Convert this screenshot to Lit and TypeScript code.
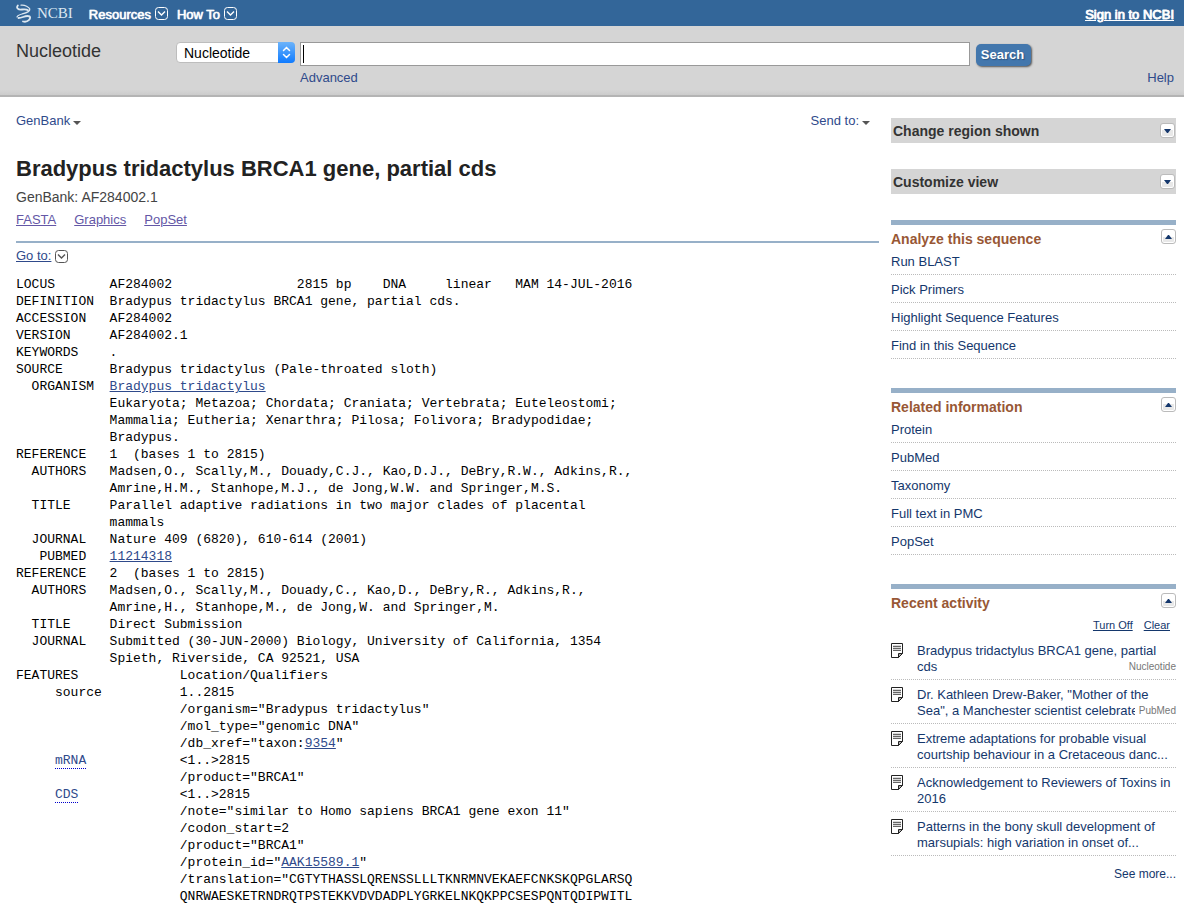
import { LitElement, html, css, svg, nothing, type TemplateResult } from "lit";
import { customElement, property } from "lit/decorators.js";
import { classMap } from "lit/directives/class-map.js";

const chevronBox = html`<svg class="chev" width="13" height="13" viewBox="0 0 13 13" aria-hidden="true">
  <rect x="0.5" y="0.5" width="12" height="12" rx="3" fill="none" stroke="currentColor" />
  <path d="M3 4.500l3.500 3.500 3.500-3.500" fill="none" stroke="currentColor" stroke-width="1.4" />
</svg>`;

const caretDown = html`<svg width="8" height="4" viewBox="0 0 8 4" aria-hidden="true">
  <path d="M0 0h8L4 4z" fill="#555" />
</svg>`;

@customElement("panel-toggle")
export class PanelToggle extends LitElement {
  @property({ type: Boolean }) open = false;
  @property() label = "";

  static styles = css`
    :host {
      display: block;
      line-height: 0;
    }
    .toggle {
      box-sizing: border-box;
      width: 15px;
      height: 15px;
      padding: 0;
      border: 1px solid #bbb;
      border-radius: 3px;
      background: linear-gradient(#fff 50%, #e8e8e8 50%);
      box-shadow: inset 0 0 0 1px #fff;
      display: grid;
      place-items: center;
      cursor: pointer;
    }
  `;

  render() {
    return html`<button class="toggle" type="button" aria-label=${this.label} aria-expanded=${this.open ? "true" : "false"}>
      <svg width="7" height="4" viewBox="0 0 7 4">
        ${this.open
          ? svg`<path d="M0 4L3 0h1l3 4z" fill="#14376c" />`
          : svg`<path d="M0 0h7L4 4H3z" fill="#14376c" />`}
      </svg>
    </button>`;
  }
}

@customElement("link-panel")
export class LinkPanel extends LitElement {
  @property() heading = "";
  @property({ attribute: false }) links: string[] = [];

  static styles = css`
    :host {
      display: block;
      border-top: 5px solid #97b0c8;
    }
    .head {
      display: flex;
      justify-content: space-between;
      align-items: flex-start;
      height: 22px;
    }
    .title {
      margin: 0;
      padding-top: 6px;
      font-size: 14px;
      line-height: 16px;
      color: #985735;
    }
    .knob {
      padding-top: 4px;
    }
    .list {
      list-style: none;
      margin: 0;
      padding: 0;
    }
    .item {
      padding: 7px 0 4px;
      border-bottom: 1px dotted #bbb;
      line-height: 16px;
    }
    .link {
      color: #14376c;
      text-decoration: none;
    }
  `;

  render() {
    return html`
      <div class="head">
        <h3 class="title">${this.heading}</h3>
        <panel-toggle class="knob" open label=${"Collapse " + this.heading}></panel-toggle>
      </div>
      ${this.links.length
        ? html`<ul class="list">
            ${this.links.map((t) => html`<li class="item"><a class="link" href="#">${t}</a></li>`)}
          </ul>`
        : nothing}
      <slot></slot>
    `;
  }
}

interface Visit {
  text: string;
  source?: string;
}

const visits: Visit[] = [
  { text: "Bradypus tridactylus BRCA1 gene, partial cds", source: "Nucleotide" },
  { text: 'Dr. Kathleen Drew-Baker, "Mother of the Sea", a Manchester scientist celebrated', source: "PubMed" },
  { text: "Extreme adaptations for probable visual courtship behaviour in a Cretaceous danc..." },
  { text: "Acknowledgement to Reviewers of Toxins in 2016" },
  { text: "Patterns in the bony skull development of marsupials: high variation in onset of..." },
];

@customElement("recent-activity")
export class RecentActivity extends LitElement {
  static styles = css`
    :host {
      display: block;
    }
    .link {
      color: #14376c;
    }
    .actions {
      display: flex;
      justify-content: flex-end;
      gap: 11px;
      padding: 7px 6px 4px 0;
      font-size: 11px;
      line-height: 14px;
    }
    .list {
      list-style: none;
      margin: 0;
      padding: 0;
    }
    .item {
      position: relative;
      display: grid;
      grid-template-columns: 12px minmax(0, 1fr);
      column-gap: 14px;
      padding: 7px 0 4px;
      border-bottom: 1px dotted #bbb;
    }
    .text {
      height: 32px;
      line-height: 16px;
      overflow: hidden;
      text-decoration: none;
    }
    .source {
      position: absolute;
      right: 0;
      bottom: 5px;
      padding-left: 4px;
      background: #fff;
      color: #777;
      font-size: 10px;
      line-height: 15px;
    }
    .more {
      padding-top: 10px;
      font-size: 12px;
      line-height: 16px;
      text-align: right;
    }
    .more .link {
      text-decoration: none;
    }
  `;

  render() {
    return html`
      <div class="actions"><a class="link" href="#">Turn Off</a><a class="link" href="#">Clear</a></div>
      <ul class="list">
        ${visits.map(
          (v) => html`<li class="item">
            <svg class="doc" width="12" height="15" viewBox="0 0 12 15" aria-hidden="true">
              <path d="M0.5 0.5h11v10l-4 4h-7z" fill="#fff" stroke="#222" />
              <path d="M2 2h8v6H2z" fill="#d8d8d8" />
              <path d="M2 3.500h8M2 5.500h8M2 7.500h8" stroke="#666" />
              <path d="M7.500 14.500v-4h4z" fill="#aaa" stroke="#222" />
            </svg>
            <a class="link text" href="#">${v.text}</a>
            ${v.source ? html`<span class="source">${v.source}</span>` : nothing}
          </li>`
        )}
      </ul>
      <div class="more"><a class="link" href="#">See more...</a></div>
    `;
  }
}

type Line = string | TemplateResult;

interface Field {
  label: string;
  indent?: number;
  link?: boolean;
  lines: Line[];
}

const header: Field[] = [
  { label: "LOCUS", lines: ["AF284002                2815 bp    DNA     linear   MAM 14-JUL-2016"] },
  { label: "DEFINITION", lines: ["Bradypus tridactylus BRCA1 gene, partial cds."] },
  { label: "ACCESSION", lines: ["AF284002"] },
  { label: "VERSION", lines: ["AF284002.1"] },
  { label: "KEYWORDS", lines: ["."] },
  { label: "SOURCE", lines: ["Bradypus tridactylus (Pale-throated sloth)"] },
  {
    label: "ORGANISM",
    indent: 2,
    lines: [
      html`<a href="#">Bradypus tridactylus</a>`,
      "Eukaryota; Metazoa; Chordata; Craniata; Vertebrata; Euteleostomi;",
      "Mammalia; Eutheria; Xenarthra; Pilosa; Folivora; Bradypodidae;",
      "Bradypus.",
    ],
  },
  { label: "REFERENCE", lines: ["1  (bases 1 to 2815)"] },
  {
    label: "AUTHORS",
    indent: 2,
    lines: [
      "Madsen,O., Scally,M., Douady,C.J., Kao,D.J., DeBry,R.W., Adkins,R.,",
      "Amrine,H.M., Stanhope,M.J., de Jong,W.W. and Springer,M.S.",
    ],
  },
  {
    label: "TITLE",
    indent: 2,
    lines: ["Parallel adaptive radiations in two major clades of placental", "mammals"],
  },
  { label: "JOURNAL", indent: 2, lines: ["Nature 409 (6820), 610-614 (2001)"] },
  { label: "PUBMED", indent: 3, lines: [html`<a href="#">11214318</a>`] },
  { label: "REFERENCE", lines: ["2  (bases 1 to 2815)"] },
  {
    label: "AUTHORS",
    indent: 2,
    lines: [
      "Madsen,O., Scally,M., Douady,C., Kao,D., DeBry,R., Adkins,R.,",
      "Amrine,H., Stanhope,M., de Jong,W. and Springer,M.",
    ],
  },
  { label: "TITLE", indent: 2, lines: ["Direct Submission"] },
  {
    label: "JOURNAL",
    indent: 2,
    lines: [
      "Submitted (30-JUN-2000) Biology, University of California, 1354",
      "Spieth, Riverside, CA 92521, USA",
    ],
  },
];

const features: Field[] = [
  { label: "FEATURES", lines: ["Location/Qualifiers"] },
  {
    label: "source",
    indent: 5,
    lines: [
      "1..2815",
      '/organism="Bradypus tridactylus"',
      '/mol_type="genomic DNA"',
      html`/db_xref="taxon:<a href="#">9354</a>"`,
    ],
  },
  { label: "mRNA", indent: 5, link: true, lines: ["<1..>2815", '/product="BRCA1"'] },
  {
    label: "CDS",
    indent: 5,
    link: true,
    lines: [
      "<1..>2815",
      '/note="similar to Homo sapiens BRCA1 gene exon 11"',
      "/codon_start=2",
      '/product="BRCA1"',
      html`/protein_id="<a href="#">AAK15589.1</a>"`,
      '/translation="CGTYTHASSLQRENSSLLLTKNRMNVEKAEFCNKSKQPGLARSQ',
      "QNRWAESKETRNDRQTPSTEKKVDVDADPLYGRKELNKQKPPCSESPQNTQDIPWITL",
    ],
  },
];

@customElement("flat-record")
export class FlatRecord extends LitElement {
  static styles = css`
    :host {
      display: block;
      font: 13px/17px "Liberation Mono", "Courier New", monospace;
      color: #000;
    }
    a {
      color: #2f4a8b;
    }
    .table {
      display: grid;
      grid-template-columns: 12ch minmax(0, 1fr);
      margin: 0;
    }
    .features {
      grid-template-columns: 21ch minmax(0, 1fr);
    }
    .label,
    .value {
      margin: 0;
      white-space: pre;
    }
    .in2 {
      padding-left: 2ch;
    }
    .in3 {
      padding-left: 3ch;
    }
    .in5 {
      padding-left: 5ch;
    }
    .feat {
      text-decoration: underline dotted #00c 1px;
      text-underline-offset: 4px;
    }
  `;

  private table(fields: Field[], wide: boolean) {
    return html`<dl class=${classMap({ table: true, features: wide })}>
      ${fields.map(
        (f) => html`<dt class=${classMap({ label: true, in2: f.indent === 2, in3: f.indent === 3, in5: f.indent === 5 })}>${f.link
              ? html`<a class="feat" href="#">${f.label}</a>`
              : f.label}</dt>
          <dd class="value">${f.lines.map((l) => html`<div>${l}</div>`)}</dd>`
      )}
    </dl>`;
  }

  render() {
    return html`${this.table(header, false)}${this.table(features, true)}`;
  }
}

@customElement("app-root")
export class AppRoot extends LitElement {
  static styles = css`
    :host {
      display: block;
      font: 13px/16px "Liberation Sans", Arial, Helvetica, sans-serif;
      color: #222;
      background: #fff;
    }
    a {
      color: #2f4a8b;
    }
    .bar {
      display: flex;
      align-items: center;
      height: 26px;
      padding: 0 10px 0 16px;
      background: #336699;
      color: #fff;
    }
    .bar a,
    .menu {
      color: #fff;
      text-shadow: 0 0 1px #fff;
    }
    .logo {
      display: flex;
      align-items: center;
      gap: 6px;
      margin-right: 16px;
      height: 24px;
    }
    .bar .brand {
      font: 15px/18px "Liberation Serif", "Times New Roman", serif;
      text-shadow: none;
      color: #dde8f1;
    }
    .logo-link {
      text-decoration: none;
    }
    .menu {
      display: flex;
      align-items: center;
      gap: 4px;
      margin: 0 9px 0 0;
      padding: 0;
      border: 0;
      background: none;
      font: inherit;
    }
    .menu-text {
      padding-top: 3px;
      -webkit-text-stroke: 0.4px #fff;
    }
    .signin {
      margin-left: auto;
      padding-top: 3px;
      -webkit-text-stroke: 0.4px #fff;
    }
    .search {
      display: grid;
      grid-template-columns: 160px 124px minmax(0, 1fr) 61px 143px;
      padding: 16px 10px 9px 16px;
      background: linear-gradient(#d5d5d5 92%, #cccccc);
      border-bottom: 2px solid #b4b4b4;
    }
    .db {
      margin: 0;
      font-size: 18px;
      font-weight: 400;
      line-height: 18px;
      color: #333;
    }
    .pick {
      position: relative;
      width: 119px;
      height: 21px;
    }
    .select {
      appearance: none;
      box-sizing: border-box;
      width: 119px;
      height: 21px;
      padding: 0 20px 0 7px;
      border: 1px solid #bdbdbd;
      border-radius: 4px;
      background: #fff;
      font: 14px/18px "Liberation Sans", Arial, sans-serif;
      color: #000;
    }
    .arrows {
      position: absolute;
      right: 0;
      top: 0;
      pointer-events: none;
    }
    .term {
      box-sizing: border-box;
      width: 100%;
      height: 24px;
      padding: 0 4px;
      border: 1px solid #999;
      background: linear-gradient(#000, #000) 2px 2px / 1px 18px no-repeat #fff;
      font: inherit;
    }
    .go {
      justify-self: end;
      width: 55px;
      height: 22px;
      margin-top: 2px;
      padding: 0 2px 0 0;
      border: 0;
      border-radius: 5px;
      background: #4377ad;
      box-shadow: 1px 1px 2px #555;
      color: #fff;
      font: bold 13px/16px "Liberation Sans", Arial, sans-serif;
      text-shadow: 1px 1px 1px #2c5580;
    }
    .advanced {
      grid-column: 3;
      justify-self: start;
      padding-top: 4px;
    }
    .help {
      grid-column: 5;
      justify-self: end;
      padding-top: 4px;
    }
    .plain {
      text-decoration: none;
    }
    .page {
      display: grid;
      grid-template-columns: minmax(0, 1fr) 285px;
      column-gap: 12px;
      padding: 0 8px 0 16px;
    }
    .main {
      padding-top: 16px;
    }
    .tools {
      display: flex;
      justify-content: space-between;
      padding-right: 9px;
    }
    .tool {
      display: flex;
      align-items: flex-end;
      gap: 3px;
    }
    .tool svg {
      margin-bottom: 4px;
    }
    .title {
      margin: 26px 0 0;
      font-size: 22px;
      line-height: 28px;
    }
    .acc {
      margin: 6px 0 0;
      font-size: 14px;
      line-height: 16px;
      color: #444;
    }
    .views {
      display: flex;
      gap: 18px;
      margin-top: 7px;
      padding-bottom: 13px;
      border-bottom: 2px solid #97b0c8;
    }
    .views a {
      color: #6457a6;
    }
    .goto {
      display: flex;
      align-items: center;
      gap: 4px;
      margin: 5px 0 12px;
      color: #555;
    }
    .side {
      padding-top: 21px;
    }
    .fold {
      display: flex;
      justify-content: space-between;
      align-items: center;
      height: 25px;
      margin-bottom: 26px;
      padding: 0 1px 0 2px;
      background: #d5d5d5;
    }
    .fold-title {
      margin: 0;
      font-size: 14px;
      line-height: 16px;
      color: #333;
    }
    .panel {
      margin-bottom: 29px;
    }
    .panel:last-child {
      margin-bottom: 0;
    }
  `;

  render() {
    return html`
      <header>
        <nav class="bar" aria-label="NCBI">
          <a class="logo-link" href="#" aria-label="NCBI home"
            ><span class="logo">
              <svg width="15" height="19" viewBox="0 0 15 19" aria-hidden="true" fill="none" stroke="#dde8f1" stroke-linecap="round">
                <path d="M1.800 1.500C0 4 2 6 6 5.500S11 5.500 12 6.300" stroke-width="1.8" />
                <path d="M5 1.200C9 0.800 13 3 13.800 5C14.300 8 10 9 6 10S1.500 11.500 1 13" stroke-width="1.2" />
                <path d="M2.500 14C6 14 8 12 11.500 12S14.500 14.500 12.800 16.200S9 18 7 17.500" stroke-width="1.8" />
              </svg>
              <span class="brand">NCBI</span>
            </span></a
          >
          <button class="menu" type="button"><span class="menu-text">Resources</span>${chevronBox}</button>
          <button class="menu" type="button"><span class="menu-text">How To</span>${chevronBox}</button>
          <a class="signin" href="#">Sign in to NCBI</a>
        </nav>
        <form class="search" role="search" @submit=${(e: Event) => e.preventDefault()}>
          <h2 class="db">Nucleotide</h2>
          <div class="pick">
            <select class="select" aria-label="Database">
              <option>Nucleotide</option>
            </select>
            <svg class="arrows" width="17" height="21" viewBox="0 0 17 21" aria-hidden="true">
              <defs>
                <linearGradient id="blue" x1="0" y1="0" x2="0" y2="1">
                  <stop offset="0" stop-color="#6cb3fa" />
                  <stop offset="1" stop-color="#0f7bff" />
                </linearGradient>
              </defs>
              <path d="M0 0h13a4 4 0 0 1 4 4v13a4 4 0 0 1-4 4H0z" fill="url(#blue)" />
              <path d="M5.500 8.500l3-3 3 3M5.500 12.500l3 3 3-3" fill="none" stroke="#fff" stroke-width="1.5" stroke-linecap="round" />
            </svg>
          </div>
          <input class="term" type="text" aria-label="Search term" />
          <button class="go" type="submit">Search</button>
          <a class="advanced plain" href="#">Advanced</a>
          <a class="help plain" href="#">Help</a>
        </form>
      </header>
      <div class="page">
        <main class="main">
          <div class="tools">
            <a class="tool plain" href="#">GenBank ${caretDown}</a>
            <a class="tool plain" href="#">Send to: ${caretDown}</a>
          </div>
          <h1 class="title">Bradypus tridactylus BRCA1 gene, partial cds</h1>
          <p class="acc">GenBank: AF284002.1</p>
          <div class="views"><a href="#">FASTA</a><a href="#">Graphics</a><a href="#">PopSet</a></div>
          <div class="goto"><a href="#">Go to:</a>${chevronBox}</div>
          <flat-record></flat-record>
        </main>
        <aside class="side">
          <section class="fold">
            <h3 class="fold-title">Change region shown</h3>
            <panel-toggle label="Expand Change region shown"></panel-toggle>
          </section>
          <section class="fold">
            <h3 class="fold-title">Customize view</h3>
            <panel-toggle label="Expand Customize view"></panel-toggle>
          </section>
          <link-panel
            class="panel"
            heading="Analyze this sequence"
            .links=${["Run BLAST", "Pick Primers", "Highlight Sequence Features", "Find in this Sequence"]}
          ></link-panel>
          <link-panel
            class="panel"
            heading="Related information"
            .links=${["Protein", "PubMed", "Taxonomy", "Full text in PMC", "PopSet"]}
          ></link-panel>
          <link-panel class="panel" heading="Recent activity"><recent-activity></recent-activity></link-panel>
        </aside>
      </div>
    `;
  }
}
